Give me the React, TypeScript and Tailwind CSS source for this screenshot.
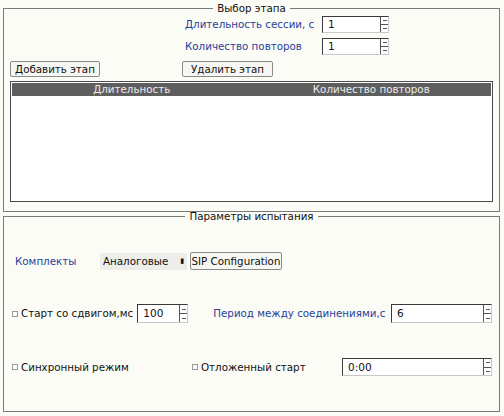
import React from "react";

const font = { fontFamily: '"DejaVu Sans", "Noto Sans", sans-serif' };

function Spin({ value, cls }: { value: string; cls: string }) {
  return (
    <div className={`flex border border-t-[#3a3a3a] border-l-[#3a3a3a] border-b-[#c8c8c8] border-r-[#c8c8c8] bg-white ${cls}`}>
      <div className="flex flex-1 items-center pl-[5px] text-[10.5px] text-[#111]">{value}</div>
      <div className="flex w-[8px] flex-col border-l border-[#555]">
        <div className="flex flex-1 items-center justify-center border-b border-[#555]">
          <div className="h-px w-[4px] bg-[#555]" />
        </div>
        <div className="flex flex-1 items-center justify-center">
          <div className="h-px w-[4px] bg-[#555]" />
        </div>
      </div>
    </div>
  );
}

function Check({ label }: { label: string }) {
  return (
    <div className="flex items-center gap-[3px] text-[#111]">
      <div className="h-[6px] w-[6px] border border-[#9a9a9a] bg-white" />
      <span>{label}</span>
    </div>
  );
}

export default function App() {
  return (
    <div style={font} className="h-[416px] w-[504px] overflow-hidden whitespace-nowrap bg-[#fcfcf6] pl-[3px] pr-[4px] pt-[2px] text-[10.3px] leading-[13px]">
      <fieldset className="h-[210px] border border-[#7a7a7a]">
        <legend className="mx-auto px-[4px] leading-[13px] text-[#111]">Выбор этапа</legend>
        <div className="ml-[181px] mt-[1px] flex flex-col gap-[5px]">
          <div className="flex items-center">
            <span className="w-[137px] text-[#26409a]">Длительность сессии, с</span>
            <Spin value="1" cls="h-[17px] w-[67px]" />
          </div>
          <div className="flex items-center">
            <span className="w-[137px] text-[#26409a]">Количество повторов</span>
            <Spin value="1" cls="h-[17px] w-[67px]" />
          </div>
        </div>
        <div className="ml-[6px] mt-[6px] flex items-center">
          <button className="h-[16px] w-[90px] rounded-[2px] border border-[#8a8a8a] bg-[#f6f6f2] leading-[14px] text-[#111]">Добавить этап</button>
          <button className="ml-[82px] h-[16px] w-[91px] rounded-[2px] border border-[#8a8a8a] bg-[#f6f6f2] leading-[14px] text-[#111]">Удалить этап</button>
        </div>
        <div className="mx-[6px] mt-[4px] h-[121px] border border-[#4a4a4a] bg-white p-px">
          <div className="grid h-[13px] grid-cols-2 bg-[#5e5e5e] leading-[13px] text-[#ececec]">
            <div className="text-center">Длительность</div>
            <div className="text-center">Количество повторов</div>
          </div>
        </div>
      </fieldset>
      <fieldset className="-mt-[2px] h-[202px] border border-[#7a7a7a]">
        <legend className="mx-auto px-[4px] leading-[13px] text-[#111]">Параметры испытания</legend>
        <div className="ml-[11px] mt-[29px] flex h-[18px] items-center">
          <span className="w-[85px] text-[#26409a]">Комплекты</span>
          <div className="flex h-[17px] w-[87px] items-center justify-between bg-[#ededea] pl-[3px] pr-[3px] text-[#111]">
            <span>Аналоговые</span>
            <span className="text-[7px]">▮</span>
          </div>
          <button className="ml-[3px] h-[18px] w-[92px] rounded-[2px] border border-[#8a8a8a] bg-[#f6f6f2] leading-[16px] text-[#111]">SIP Configuration</button>
        </div>
        <div className="ml-[8px] mr-[7px] mt-[34px] flex h-[19px] items-center">
          <Check label="Старт со сдвигом,мс" />
          <Spin value="100" cls="ml-[4px] h-[19px] w-[51px]" />
          <span className="ml-[25px] text-[#26409a]">Период между соединениями,с</span>
          <Spin value="6" cls="ml-auto h-[19px] w-[101px]" />
        </div>
        <div className="ml-[8px] mr-[7px] mt-[35px] flex h-[18px] items-center">
          <div className="w-[180px]">
            <Check label="Синхронный режим" />
          </div>
          <Check label="Отложенный старт" />
          <Spin value="0:00" cls="ml-auto h-[18px] w-[150px]" />
        </div>
      </fieldset>
    </div>
  );
}
